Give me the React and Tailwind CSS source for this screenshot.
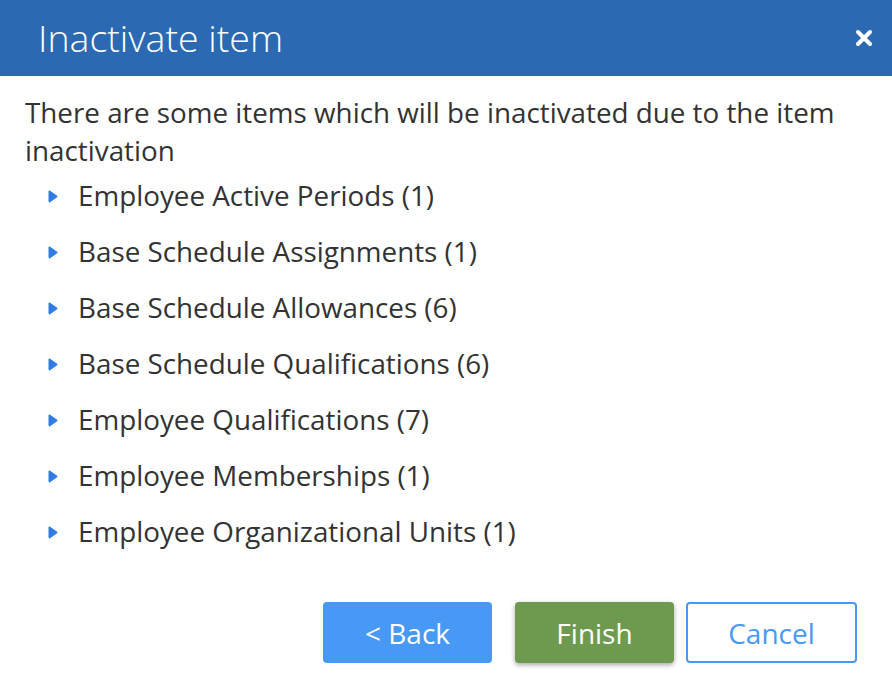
import React from "react";

const items = [
  "Employee Active Periods (1)",
  "Base Schedule Assignments (1)",
  "Base Schedule Allowances (6)",
  "Base Schedule Qualifications (6)",
  "Employee Qualifications (7)",
  "Employee Memberships (1)",
  "Employee Organizational Units (1)",
];

const Bullet = () => (
  <svg width="10" height="13" viewBox="0 0 10 13" className="shrink-0">
    <path d="M1.5 1.5 L8.5 6.5 L1.5 11.5 Z" fill="#2f7de1" stroke="#2f7de1" strokeWidth="2" strokeLinejoin="round" />
  </svg>
);

const App = () => {
  return (
    <div
      className="w-[892px] h-[686px] bg-white flex flex-col"
      style={{ fontFamily: '"Open Sans", sans-serif' }}
    >
      <div className="h-[76px] bg-[#2b6ab3] flex items-center justify-between pl-[38px] pr-[19px]">
        <h1 className="text-white text-[37.5px] font-light leading-none -mt-[1px]">
          Inactivate item
        </h1>
        <svg width="18" height="18" viewBox="0 0 18 18" className="-mt-[1px]">
          <path d="M3 3 L15 15 M15 3 L3 15" stroke="white" strokeWidth="4" strokeLinecap="round" />
        </svg>
      </div>

      <div className="pl-[25px] pr-[20px] pt-[17px]">
        <p className="text-[#333333] text-[27.8px] leading-[38px]">
          There are some items which will be inactivated due to the item inactivation
        </p>
        <ul className="pl-[23px] mt-[8px] flex flex-col gap-[18px]">
          {items.map((item) => (
            <li key={item} className="flex items-center gap-[20px] h-[38px] text-[#333333] text-[27.8px]">
              <Bullet />
              <span>{item}</span>
            </li>
          ))}
        </ul>
      </div>

      <div className="flex justify-end items-center pr-[35px] mt-[51px]">
        <button className="w-[169px] h-[61px] rounded-[4px] bg-[#4899f5] text-white text-[28px]">
          &lt; Back
        </button>
        <button className="ml-[23px] w-[159px] h-[61px] rounded-[4px] bg-[#6e9a50] text-white text-[28px] shadow-[0_2px_5px_rgba(0,0,0,0.35)]">
          Finish
        </button>
        <button className="ml-[12px] w-[171px] h-[61px] rounded-[4px] bg-white border-2 border-[#4899f5] text-[#4899f5] text-[28px]">
          Cancel
        </button>
      </div>
    </div>
  );
};

export default App;
